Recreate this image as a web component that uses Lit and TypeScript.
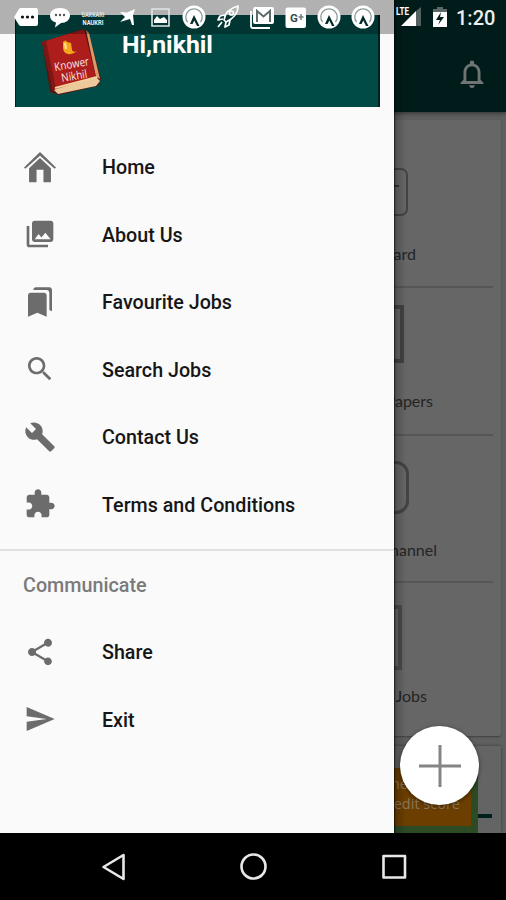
import { LitElement, html, css, svg } from "lit";
import { customElement } from "lit/decorators.js";

const G = {
  home: svg`<path d="M12 .8 24 12.300 23 13.400 12 3.500 1 13.400 0 12.300Z"/><path d="M12 5.200 20.200 13V23.500H14.600V14H9.400V23.500H3.800V13Z"/>`,
  about: svg`<path d="M22 16V4c0-1.100-.9-2-2-2H8c-1.100 0-2 .9-2 2v12c0 1.100.9 2 2 2h12c1.100 0 2-.9 2-2zm-11-4l2.030 2.710L16 11l4 5H8l3-4zM2 6v14c0 1.100.9 2 2 2h14v-2H4V6H2z"/>`,
  fav: svg`<path d="M19 18l2 1V3c0-1.100-.9-2-2-2H8.990C7.890 1 7 1.900 7 3h10c1.100 0 2 .9 2 2v13zM15 5H5c-1.100 0-2 .9-2 2v16l7-3 7 3V7c0-1.100-.9-2-2-2z"/>`,
  search: svg`<path d="M15.500 14h-.79l-.28-.27C15.410 12.590 16 11.110 16 9.500 16 5.910 13.090 3 9.500 3S3 5.910 3 9.500 5.910 16 9.500 16c1.610 0 3.090-.59 4.230-1.570l.27.28v.79l5 4.990L20.490 19l-4.990-5zm-6 0C7.010 14 5 11.990 5 9.500S7.010 5 9.500 5 14 7.010 14 9.500 11.990 14 9.500 14z"/>`,
  contact: svg`<path d="M22.700 19l-9.100-9.100c.9-2.300.4-5-1.500-6.900-2-2-5-2.400-7.400-1.300L9 6 6 9 1.600 4.700C.4 7.100.9 10.100 2.900 12.100c1.900 1.900 4.600 2.400 6.900 1.500l9.100 9.100c.4.4 1 .4 1.400 0l2.300-2.300c.5-.4.5-1.100.1-1.400z"/>`,
  terms: svg`<path d="M20.500 11H19V7c0-1.100-.9-2-2-2h-4V3.500C13 2.120 11.880 1 10.500 1S8 2.120 8 3.500V5H4c-1.100 0-1.990.9-1.990 2v3.800H3.500c1.490 0 2.700 1.210 2.700 2.700s-1.210 2.700-2.700 2.700H2V20c0 1.100.9 2 2 2h3.800v-1.500c0-1.490 1.210-2.700 2.700-2.700 1.490 0 2.700 1.210 2.700 2.700V22H17c1.100 0 2-.9 2-2v-4h1.500c1.380 0 2.500-1.120 2.500-2.500S21.880 11 20.500 11z"/>`,
  share: svg`<path d="M18 16.080c-.76 0-1.440.3-1.960.77L8.910 12.700c.05-.23.09-.46.09-.7s-.04-.47-.09-.7l7.050-4.110c.54.5 1.250.81 2.040.81 1.660 0 3-1.340 3-3s-1.340-3-3-3-3 1.340-3 3c0 .24.04.47.09.7L8.040 9.810C7.500 9.310 6.790 9 6 9c-1.660 0-3 1.340-3 3s1.340 3 3 3c.79 0 1.500-.31 2.040-.81l7.120 4.160c-.05.21-.08.43-.08.65 0 1.610 1.310 2.920 2.920 2.920s2.920-1.310 2.920-2.920-1.310-2.920-2.920-2.920z"/>`,
  exit: svg`<path d="M2.010 21L23 12 2.010 3 2 10l15 2-15 2z"/>`,
};

const MAIN = [
  ["home", "Home"],
  ["about", "About Us"],
  ["fav", "Favourite Jobs"],
  ["search", "Search Jobs"],
  ["contact", "Contact Us"],
  ["terms", "Terms and Conditions"],
] as const;
const COMM = [
  ["share", "Share"],
  ["exit", "Exit"],
] as const;

const podcast = svg`<circle cx="12" cy="12" r="11.500" fill="#fff"/><path d="M5.500 17A8.200 8.200 0 1 1 18.500 17" fill="none" stroke="#8a9c9a" stroke-width="1.300"/><path d="M8 19 12 10 17.500 21H15L12.300 15.500 10.500 19Z" fill="#002b28"/>`;

const STATUS = [
  svg`<path d="M0 12 5 4Q5.500 3 7 3H22Q24 3 24 5V19Q24 21 22 21H7Q5.500 21 5 20Z" fill="#fff"/><g fill="#111"><circle cx="8.500" cy="12" r="1.600"/><circle cx="13.500" cy="12" r="1.600"/><circle cx="18.500" cy="12" r="1.600"/></g>`,
  svg`<path d="M12 3C18 3 22 6 22 10.500S18 18 13 18L7 22.500 8 17.500C4 16.500 2 14 2 10.500 2 6 6 3 12 3Z" fill="#fff"/><g fill="#555"><circle cx="8" cy="10" r="1.200"/><circle cx="12" cy="10" r="1.200"/><circle cx="16" cy="10" r="1.200"/></g>`,
  svg`<text x="12" y="11.500" text-anchor="middle" font-size="6.500" font-weight="900" textLength="23" lengthAdjust="spacingAndGlyphs" fill="#d4dddc">SARKARI</text><text x="12" y="20" text-anchor="middle" font-size="7.500" font-weight="700" textLength="21" lengthAdjust="spacingAndGlyphs" fill="#eef2f2">NAUKRI</text>`,
  svg`<path d="M5 7 12 7.500 20 4 18 10 19 20 17 20 15 14 5 17 10 12Z" fill="#fff"/>`,
  svg`<path d="M3 4H20V21H3Z" fill="none" stroke="#dfe5e5" stroke-width="1.600"/><path d="M5 18V15L8 11 11 14 15 12 18 15V18Z" fill="#fff"/>`,
  podcast,
  svg`<g fill="none" stroke="#fff" stroke-width="1.700" stroke-linejoin="round"><path d="M8 15C9 8 14 3 22 1 22 8 17 14 10 17Z"/><path d="M9 10 4 11 2 15 7 14M14 15 13 20 9 22 10 17M6 17 2 22"/><circle cx="15.500" cy="8" r="2"/></g>`,
  svg`<path d="M5 2H22Q24 2 24 4V17Q24 19 22 19H5Q3 19 3 17V4Q3 2 5 2Z" fill="#fff"/><path d="M1 6V21Q1 23 3 23H20" fill="none" stroke="#fff" stroke-width="1.800"/><path d="M7 17V6L13.500 11.500 20 6V17" fill="none" stroke="#5d6b6a" stroke-width="2"/>`,
  svg`<rect x="1.500" y="2.500" width="20.500" height="20.500" rx="2" fill="#fff"/><text x="10" y="17" text-anchor="middle" font-size="11.500" font-weight="700" fill="#334b49">G</text><path d="M17 9V15M14.500 12H19.500" stroke="#6d7d7b" stroke-width="1.500"/>`,
  podcast,
  podcast,
];

const TILES = [
  { label: "Admit Card", kind: "card" },
  { label: "Question Papers", kind: "papers" },
  { label: "Youtube Channel", kind: "channel" },
  { label: "Featured Jobs", kind: "jobs" },
];

@customElement("app-root")
export class AppRoot extends LitElement {
  static styles = css`
    :host { display: flex; flex-direction: column; position: relative; width: 506px; height: 900px; overflow: hidden; background: #000; font-family: Roboto, sans-serif; }
    * { box-sizing: border-box; }
    svg { display: block; }
    .stage { position: relative; height: 833px; overflow: hidden; }
    .page { display: flex; flex-direction: column; height: 833px; background: #606060; }
    .appbar { display: flex; align-items: flex-end; justify-content: flex-end; height: 112px; padding: 0 17px 21px 0; background: #001c1a; box-shadow: 0 1px 5px rgba(0,0,0,.55); flex: none; z-index: 1; }
    .tiles { display: flex; flex-direction: column; width: 501px; height: 616px; margin-top: 8px; padding-left: 253px; background: #666; border-radius: 2px; box-shadow: 0 1px 2px rgba(0,0,0,.35); flex: none; }
    .tile { display: flex; flex-direction: column; height: 147.600px; margin-right: 8px; border-bottom: 2px solid #565656; align-items: flex-end; }
    .tile:first-child { height: 168.300px; padding-top: 20px; }
    .tile:last-child { border-bottom: 0; }
    .art { display: flex; justify-content: flex-end; align-items: center; height: 104px; color: #3f3f3f; padding-right: 85px; }
    .shape { border: 2px solid #434343; width: 52px; height: 48px; border-radius: 7px; }
    .dash { width: 5px; height: 2px; background: #333; margin: 15px 7px 0 auto; }
    .papers .art { padding: 0 89px 11px 0; height: 103px; }
    .papers .shape { border-width: 4px; border-radius: 0; height: 58px; }
    .channel .art { padding: 0 84px 0 0; }
    .channel .shape { border-width: 3px; border-radius: 13px; height: 53px; }
    .jobs .art { padding-right: 91px; padding-top: 5px; height: 103px; }
    .jobs .shape { border-width: 4px; border-color: #4b4b4b; border-radius: 0; height: 65px; }
    .label { font: 16px/20px Lato, sans-serif; color: #242424; white-space: nowrap; padding-right: 77px; }
    .papers .label { padding-right: 60px; }
    .channel .label { padding-right: 56px; }
    .jobs .label { padding-right: 66px; }
    .promo { display: flex; align-items: flex-end; width: 501px; height: 87px; margin-top: 10px; background: #646464; box-shadow: 0 0 3px rgba(0,0,0,.4); flex: none; }
    .banner { width: 478px; height: 65px; padding: 0 7px 7px 0; background: #2c4b25; }
    .banner div { height: 58px; padding: 6px 11px 0 0; background: #6c3e00; color: #8d7658; font: 14.500px/20px "Open Sans", sans-serif; text-align: right; }
    .first { display: block; padding-right: 52px; }
    .last { display: block; }
    .rule { width: 14px; height: 4px; margin-bottom: 15px; background: #001f1d; }
    .shade { position: absolute; left: 394px; top: 0; width: 12px; height: 833px; background: linear-gradient(90deg, rgba(0,0,0,.75), rgba(0,0,0,.2) 2px, transparent); z-index: 2; }
    .fab { position: absolute; left: 400px; top: 726px; width: 79px; height: 79px; border-radius: 50%; background: #fff; display: grid; place-items: center; box-shadow: 0 1px 4px rgba(0,0,0,.5); z-index: 3; }
    .drawer { position: absolute; left: 0; top: 0; width: 394px; height: 833px; background: #fafafa; z-index: 4; display: flex; flex-direction: column; }
    .head { display: flex; align-items: flex-start; gap: 20px; height: 92px; margin: 15px 14px 26px 15px; padding: 10px 0 0 24px; background: #004b46; border: solid #00211f; border-width: 0 2px 0 1px; flex: none; }
    .hi { color: #fff; font-weight: 700; font-size: 24.800px; line-height: 28px; margin-top: 6px; }
    .item { display: flex; align-items: center; height: 67.500px; padding-left: 23.500px; gap: 46.500px; font-size: 19.700px; font-weight: 500; color: #161616; flex: none; white-space: nowrap; }
    .item svg { width: 32px; height: 32px; fill: #6c6c6c; }
    .name { display: block; padding-top: 2px; }
    .group { border-top: 2px solid #e0e0e0; margin-top: 11px; padding-top: 20px; }
    .sub { font-size: 19.750px; line-height: 30px; font-weight: 500; color: #7a7a7a; padding: 0 0 0 23px; margin-bottom: 17px; }
    .status { position: absolute; left: 0; top: 0; width: 506px; height: 34px; background: linear-gradient(90deg, rgba(0,0,0,.29) 394px, transparent 394px); z-index: 5; display: flex; align-items: center; padding-left: 14px; }
    .tray { display: flex; gap: 9.700px; width: 381px; height: 34px; align-items: center; flex: none; }
    .tray svg { width: 24px; height: 24px; flex: none; overflow: visible; }
    .clock { color: #eee; font-size: 20px; font-weight: 500; margin-left: 8px; line-height: 34px; padding-top: 2px; }
    .batt { margin-left: 10px; }
    .nav { height: 67px; background: #000; display: flex; justify-content: center; align-items: center; }
  `;

  private item(i: readonly [keyof typeof G, string]) {
    return html`<div class="item"><svg viewBox="0 0 24 24">${G[i[0]]}</svg><span class="name">${i[1]}</span></div>`;
  }

  render() {
    return html`
      <div class="stage">
        <div class="page">
          <div class="appbar">
            <svg width="34" height="34" viewBox="0 0 24 24" fill="#707574"><path d="M12 22c1.100 0 2-.9 2-2h-4c0 1.100.9 2 2 2zm6-6v-5c0-3.070-1.630-5.640-4.500-6.320V4c0-.83-.67-1.500-1.500-1.500s-1.500.67-1.500 1.500v.68C7.640 5.360 6 7.920 6 11v5l-2 2v1h16v-1l-2-2zm-2 1H8v-6c0-2.480 1.510-4.500 4-4.500s4 2.020 4 4.500v6z"/></svg>
          </div>
          <div class="tiles">
            ${TILES.map((t) => html`<div class="tile ${t.kind}"><div class="art"><div class="shape">${t.kind === "card" ? html`<div class="dash"></div>` : ""}</div></div><div class="label">${t.label}</div></div>`)}
          </div>
          <div class="promo"><div class="banner"><div><span class="first">Check the</span><span class="last">credit score</span></div></div><div class="rule"></div></div>
        </div>
        <div class="shade"></div>
        <div class="fab"><svg width="42" height="42" viewBox="0 0 42 42"><path d="M21 0V42M0 21H42" stroke="#858585" stroke-width="3"/></svg></div>
        <div class="drawer">
          <div class="head">
            <svg width="62" height="72" viewBox="0 0 62 72">
              <path d="M2 17 43 4 49 9 61 54 58 61 19 70 10 67Z" fill="#5b1512"/>
              <path d="M13 64 56 52 60 56 56 61 18 69Z" fill="#ecc99b"/>
              <path d="M46 5 49 8 60 54 56 52Z" fill="#d99a6a"/>
              <path d="M2 17 44 4 56 52 13 65Z" fill="#ad1d1c"/>
              <path d="M2 17 6 16 16 64 13 65Z" fill="#7c1714"/>
              <path d="M15 63 57 52" stroke="#f2cf9f" stroke-width="2"/>
              <path d="M23 17Q26 14 27 17L31 18 32 25Q33 28 37 26 33 30 28 29 23 28 23 22Z" fill="#f5a51c"/><path d="M25 18 26 24" stroke="#ffe2a0" stroke-width="2"/>
              <g fill="#f7e9e4" font-family="Open Sans, sans-serif" font-size="11.500" transform="rotate(-10 33 44)"><text x="15" y="43" textLength="35" lengthAdjust="spacingAndGlyphs">Knower</text><text x="20" y="55" textLength="26" lengthAdjust="spacingAndGlyphs">Nikhil</text></g>
            </svg>
            <div class="hi">Hi,nikhil</div>
          </div>
          ${MAIN.map((i) => this.item(i))}
          <div class="group"><div class="sub">Communicate</div>${COMM.map((i) => this.item(i))}</div>
        </div>
        <div class="status">
          <div class="tray">${STATUS.map((s) => html`<svg viewBox="0 0 24 24">${s}</svg>`)}</div>
          <svg width="27" height="22" viewBox="0 0 27 22"><path d="M6 20 21 5V20Z" fill="#fff"/><path d="M21 5 26 1V20H21Z" fill="#53615f"/><text x="1" y="9" font-size="10" font-weight="700" textLength="13" lengthAdjust="spacingAndGlyphs" fill="#fff">LTE</text></svg>
          <svg class="batt" width="16" height="22" viewBox="0 0 16 22"><path d="M5 1H11V3H15V7H1V3H5Z" fill="#5d6968"/><path d="M1 6H15V21H1Z" fill="#fff"/><path d="M9 6 4 14H8L6 19 12 11H8Z" fill="#001c1a"/></svg>
          <div class="clock">1:20</div>
        </div>
      </div>
      <div class="nav">
        <svg width="506" height="67" viewBox="0 0 506 67" fill="none" stroke="#e8e8e8" stroke-width="2.600" stroke-linejoin="round"><path d="M123.500 22V46L103.500 34Z"/><circle cx="253.500" cy="33.500" r="12"/><rect x="383.500" y="23" width="21.500" height="21.500"/></svg>
      </div>
    `;
  }
}
